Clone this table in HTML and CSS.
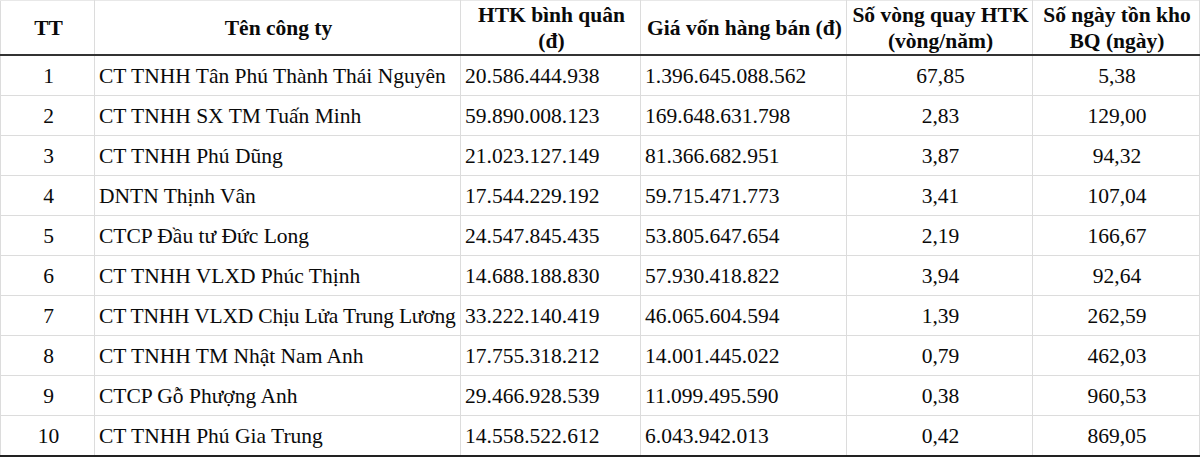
FILE: index.html
```html
<!DOCTYPE html>
<html lang="vi">
<head>
<meta charset="utf-8">
<link rel="stylesheet" href="styles.css">
</head>
<body>
<table class="tbl">
  <colgroup>
    <col class="c1"><col class="c2"><col class="c3"><col class="c4"><col class="c5"><col class="c6">
  </colgroup>
  <thead>
    <tr>
      <th>TT</th>
      <th>Tên công ty</th>
      <th>HTK bình quân<br>(đ)</th>
      <th>Giá vốn hàng bán (đ)</th>
      <th>Số vòng quay HTK<br>(vòng/năm)</th>
      <th>Số ngày tồn kho<br>BQ (ngày)</th>
    </tr>
  </thead>
  <tbody>
    <tr><td class="ctr">1</td><td>CT TNHH Tân Phú Thành Thái Nguyên</td><td>20.586.444.938</td><td>1.396.645.088.562</td><td class="ctr">67,85</td><td class="ctr">5,38</td></tr>
    <tr><td class="ctr">2</td><td>CT TNHH SX TM Tuấn Minh</td><td>59.890.008.123</td><td>169.648.631.798</td><td class="ctr">2,83</td><td class="ctr">129,00</td></tr>
    <tr><td class="ctr">3</td><td>CT TNHH Phú Dũng</td><td>21.023.127.149</td><td>81.366.682.951</td><td class="ctr">3,87</td><td class="ctr">94,32</td></tr>
    <tr><td class="ctr">4</td><td>DNTN Thịnh Vân</td><td>17.544.229.192</td><td>59.715.471.773</td><td class="ctr">3,41</td><td class="ctr">107,04</td></tr>
    <tr><td class="ctr">5</td><td>CTCP Đầu tư Đức Long</td><td>24.547.845.435</td><td>53.805.647.654</td><td class="ctr">2,19</td><td class="ctr">166,67</td></tr>
    <tr><td class="ctr">6</td><td>CT TNHH VLXD Phúc Thịnh</td><td>14.688.188.830</td><td>57.930.418.822</td><td class="ctr">3,94</td><td class="ctr">92,64</td></tr>
    <tr><td class="ctr">7</td><td class="tight">CT TNHH VLXD Chịu Lửa Trung Lương</td><td>33.222.140.419</td><td>46.065.604.594</td><td class="ctr">1,39</td><td class="ctr">262,59</td></tr>
    <tr><td class="ctr">8</td><td>CT TNHH TM Nhật Nam Anh</td><td>17.755.318.212</td><td>14.001.445.022</td><td class="ctr">0,79</td><td class="ctr">462,03</td></tr>
    <tr><td class="ctr">9</td><td>CTCP Gỗ Phượng Anh</td><td>29.466.928.539</td><td>11.099.495.590</td><td class="ctr">0,38</td><td class="ctr">960,53</td></tr>
    <tr><td class="ctr">10</td><td>CT TNHH Phú Gia Trung</td><td>14.558.522.612</td><td>6.043.942.013</td><td class="ctr">0,42</td><td class="ctr">869,05</td></tr>
  </tbody>
</table>
</body>
</html>
```

FILE: styles.css
```css
html, body {
  margin: 0;
  padding: 0;
  background: #ffffff;
}
body {
  font-family: "Liberation Serif", "Times New Roman", serif;
  color: #0a0a0a;
}
.tbl {
  width: 1199px;
  border-collapse: collapse;
  table-layout: fixed;
  font-size: 21.5px;
}
.c1 { width: 94px; }
.c2 { width: 366px; }
.c3 { width: 180px; }
.c4 { width: 206px; }
.c5 { width: 186px; }
.c6 { width: 167px; }
.tbl th, .tbl td {
  border-left: 1px solid #dcdcdc;
  border-right: 1px solid #dcdcdc;
  padding: 0 2px 0 4px;
  white-space: nowrap;
  overflow: hidden;
}
.tbl th {
  height: 53px;
  font-weight: bold;
  text-align: center;
  line-height: 26px;
  vertical-align: middle;
  border-top: 1px solid #e8e8e8;
  border-bottom: 2px solid #333333;
}
.tbl td {
  height: 39px;
  text-align: left;
  vertical-align: middle;
  border-bottom: 1px solid #dcdcdc;
  line-height: 24px;
}
.tbl tbody tr:last-child td {
  border-bottom: 2px solid #222222;
}
.tbl td.ctr {
  text-align: center;
}
.tbl td.tight {
  letter-spacing: -0.2px;
}
```
